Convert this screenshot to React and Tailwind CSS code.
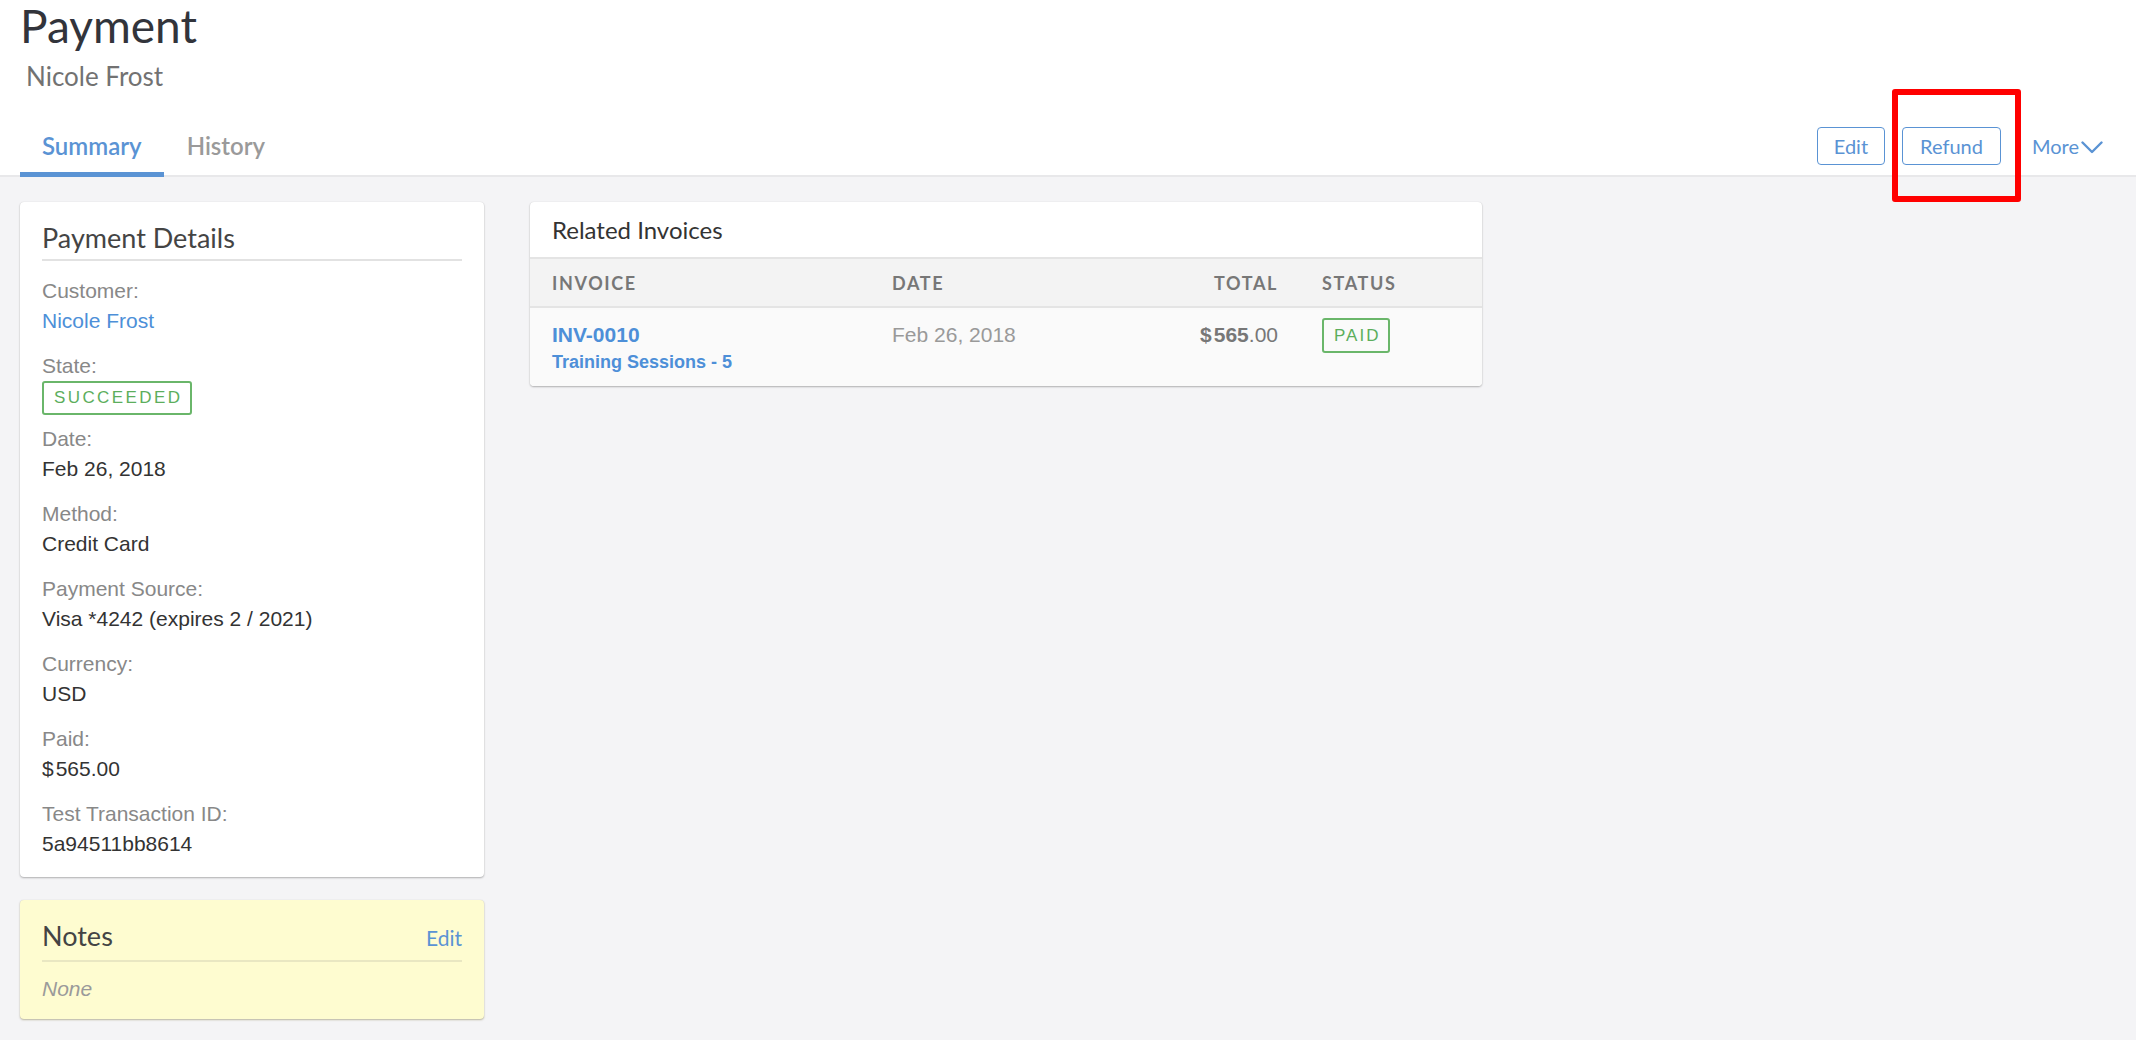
import React from "react";

const lato = "font-['Lato',sans-serif]";
const helv = "font-['Liberation_Sans',Arial,sans-serif]";

function Field({ label, children, last, mb }) {
  return (
    <div className={last ? "" : mb || "mb-[15px]"}>
      <div className={`${helv} text-[21px] leading-[30px] text-[#888888]`}>{label}</div>
      {children}
    </div>
  );
}

function Value({ children }) {
  return <div className={`${helv} text-[21px] leading-[30px] text-[#333333]`}>{children}</div>;
}

export default function App() {
  return (
    <div className={`relative min-h-[1040px] bg-[#f4f4f6] ${lato}`}>
      <header className="bg-white">
        <div className="pl-5 pt-[3px]">
          <h1 className="text-[46px] leading-none text-[#32343b]">Payment</h1>
          <div className="mt-[14px] pl-[6px] text-[26px] leading-none text-[#727272]">Nicole Frost</div>
        </div>
        <div className="mt-[45px] flex items-end justify-between border-b-2 border-[#e8e8ea] pl-5 pr-[33px]">
          <div className="flex">
            <div className="-mb-[2px] border-b-[5px] border-[#5a93d4] px-[22px] pb-[14px] text-[24px] font-semibold leading-none text-[#5a93d4]">
              Summary
            </div>
            <div className="-mb-[2px] border-b-[5px] border-transparent px-[23px] pb-[14px] text-[24px] font-semibold leading-none text-[#9a9a9a]">
              History
            </div>
          </div>
          <div className="-mt-[7px] flex items-center pb-[10px]">
            <button className="flex h-[38px] items-center rounded-[4px] border-[1.5px] border-[#5a93d4] px-[16px] text-[20px] text-[#5a93d4]">
              Edit
            </button>
            <button className="ml-[17px] flex h-[38px] items-center rounded-[4px] border-[1.5px] border-[#5a93d4] px-[17px] text-[20px] text-[#5a93d4]">
              Refund
            </button>
            <div className="ml-[31px] flex items-center text-[20px] text-[#5a93d4]">
              <span>More</span>
              <svg width="22" height="13" viewBox="0 0 22 13" className="ml-[2px] mt-[3px]" fill="none">
                <path d="M1.5 1.5 L11 11 L20.5 1.5" stroke="#5a93d4" strokeWidth="2.4" strokeLinecap="round" strokeLinejoin="round" />
              </svg>
            </div>
          </div>
        </div>
      </header>

      <main className="flex items-start gap-[46px] pl-5 pt-[25px]">
        <div className="flex w-[464px] flex-col gap-[23px]">
          <section className="rounded-[4px] bg-white px-[22px] pb-[18px] pt-[20px] shadow-[0_1px_2px_rgba(0,0,0,0.28),0_0_1px_rgba(0,0,0,0.12)]">
            <h2 className="border-b-2 border-[#e2e2e2] pb-[5px] text-[27px] leading-[32px] text-[#444444]">Payment Details</h2>
            <div className="mt-[15px]">
              <Field label="Customer:">
                <div className={`${helv} text-[21px] leading-[30px] text-[#4d8fd8]`}>Nicole Frost</div>
              </Field>
              <Field label="State:" mb="mb-[9px]">
                <div className={`${helv} inline-flex h-[34px] items-center rounded-[3px] border-2 border-[#6ab66a] pl-[10px] pr-[8px] text-[17px] tracking-[2.4px] text-[#5cae5c]`}>
                  SUCCEEDED
                </div>
              </Field>
              <Field label="Date:">
                <Value>Feb 26, 2018</Value>
              </Field>
              <Field label="Method:">
                <Value>Credit Card</Value>
              </Field>
              <Field label="Payment Source:">
                <Value>Visa *4242 (expires 2 / 2021)</Value>
              </Field>
              <Field label="Currency:">
                <Value>USD</Value>
              </Field>
              <Field label="Paid:">
                <Value>
                  $<span className="ml-[2px]">565.00</span>
                </Value>
              </Field>
              <Field label="Test Transaction ID:" last>
                <Value>5a94511bb8614</Value>
              </Field>
            </div>
          </section>

          <section className="rounded-[4px] bg-[#fefcd0] px-[22px] pb-[15px] pt-[20px] shadow-[0_1px_2px_rgba(80,70,0,0.35),0_0_1px_rgba(0,0,0,0.12)]">
            <div className="flex items-baseline justify-between border-b-2 border-[#e9e7c2] pb-[6px]">
              <h2 className="text-[27px] leading-[32px] text-[#444444]">Notes</h2>
              <span className="text-[21px] text-[#5a93d4]">Edit</span>
            </div>
            <div className={`${helv} mt-[12px] text-[21px] italic leading-[30px] text-[#9a9a9a]`}>None</div>
          </section>
        </div>

        <section className="w-[952px] overflow-hidden rounded-[4px] bg-white shadow-[0_1px_2px_rgba(0,0,0,0.28),0_0_1px_rgba(0,0,0,0.12)]">
          <div className="flex h-[55px] items-center px-[22px] text-[24px] leading-none text-[#333333]">Related Invoices</div>
          <div className="grid h-[51px] grid-cols-[340px_230px_200px_1fr] items-center border-y-2 border-[#e4e4e4] bg-[#f3f3f3] text-[18px] font-bold leading-none tracking-[0.09em] text-[#777777]">
            <div className="px-[22px]">INVOICE</div>
            <div className="px-[22px]">DATE</div>
            <div className="px-[22px] text-right">TOTAL</div>
            <div className="px-[22px]">STATUS</div>
          </div>
          <div className={`${helv} grid grid-cols-[340px_230px_200px_1fr] bg-[#fafafa] pb-[12px] pt-[12px]`}>
            <div className="px-[22px]">
              <div className="text-[21px] font-bold leading-[30px] text-[#4d8fd8]">INV-0010</div>
              <div className="text-[18px] font-bold leading-[24px] text-[#4d8fd8]">Training Sessions - 5</div>
            </div>
            <div className="px-[22px] text-[21px] leading-[30px] text-[#999999]">Feb 26, 2018</div>
            <div className="px-[22px] text-right text-[21px] leading-[30px] text-[#777777]">
              <span className="font-bold">$</span>
              <span className="ml-[2px] font-bold">565</span>
              <span>.00</span>
            </div>
            <div className="px-[22px]">
              <div className="-mt-[2px] inline-flex h-[35px] items-center rounded-[3px] border-2 border-[#6ab66a] pl-[10px] pr-[8px] text-[17px] tracking-[2px] text-[#5cae5c]">
                PAID
              </div>
            </div>
          </div>
        </section>
      </main>

      <div className="pointer-events-none absolute left-[1892px] top-[89px] h-[113px] w-[129px] rounded-[3px] border-[6px] border-[#ff0000]"></div>
    </div>
  );
}
